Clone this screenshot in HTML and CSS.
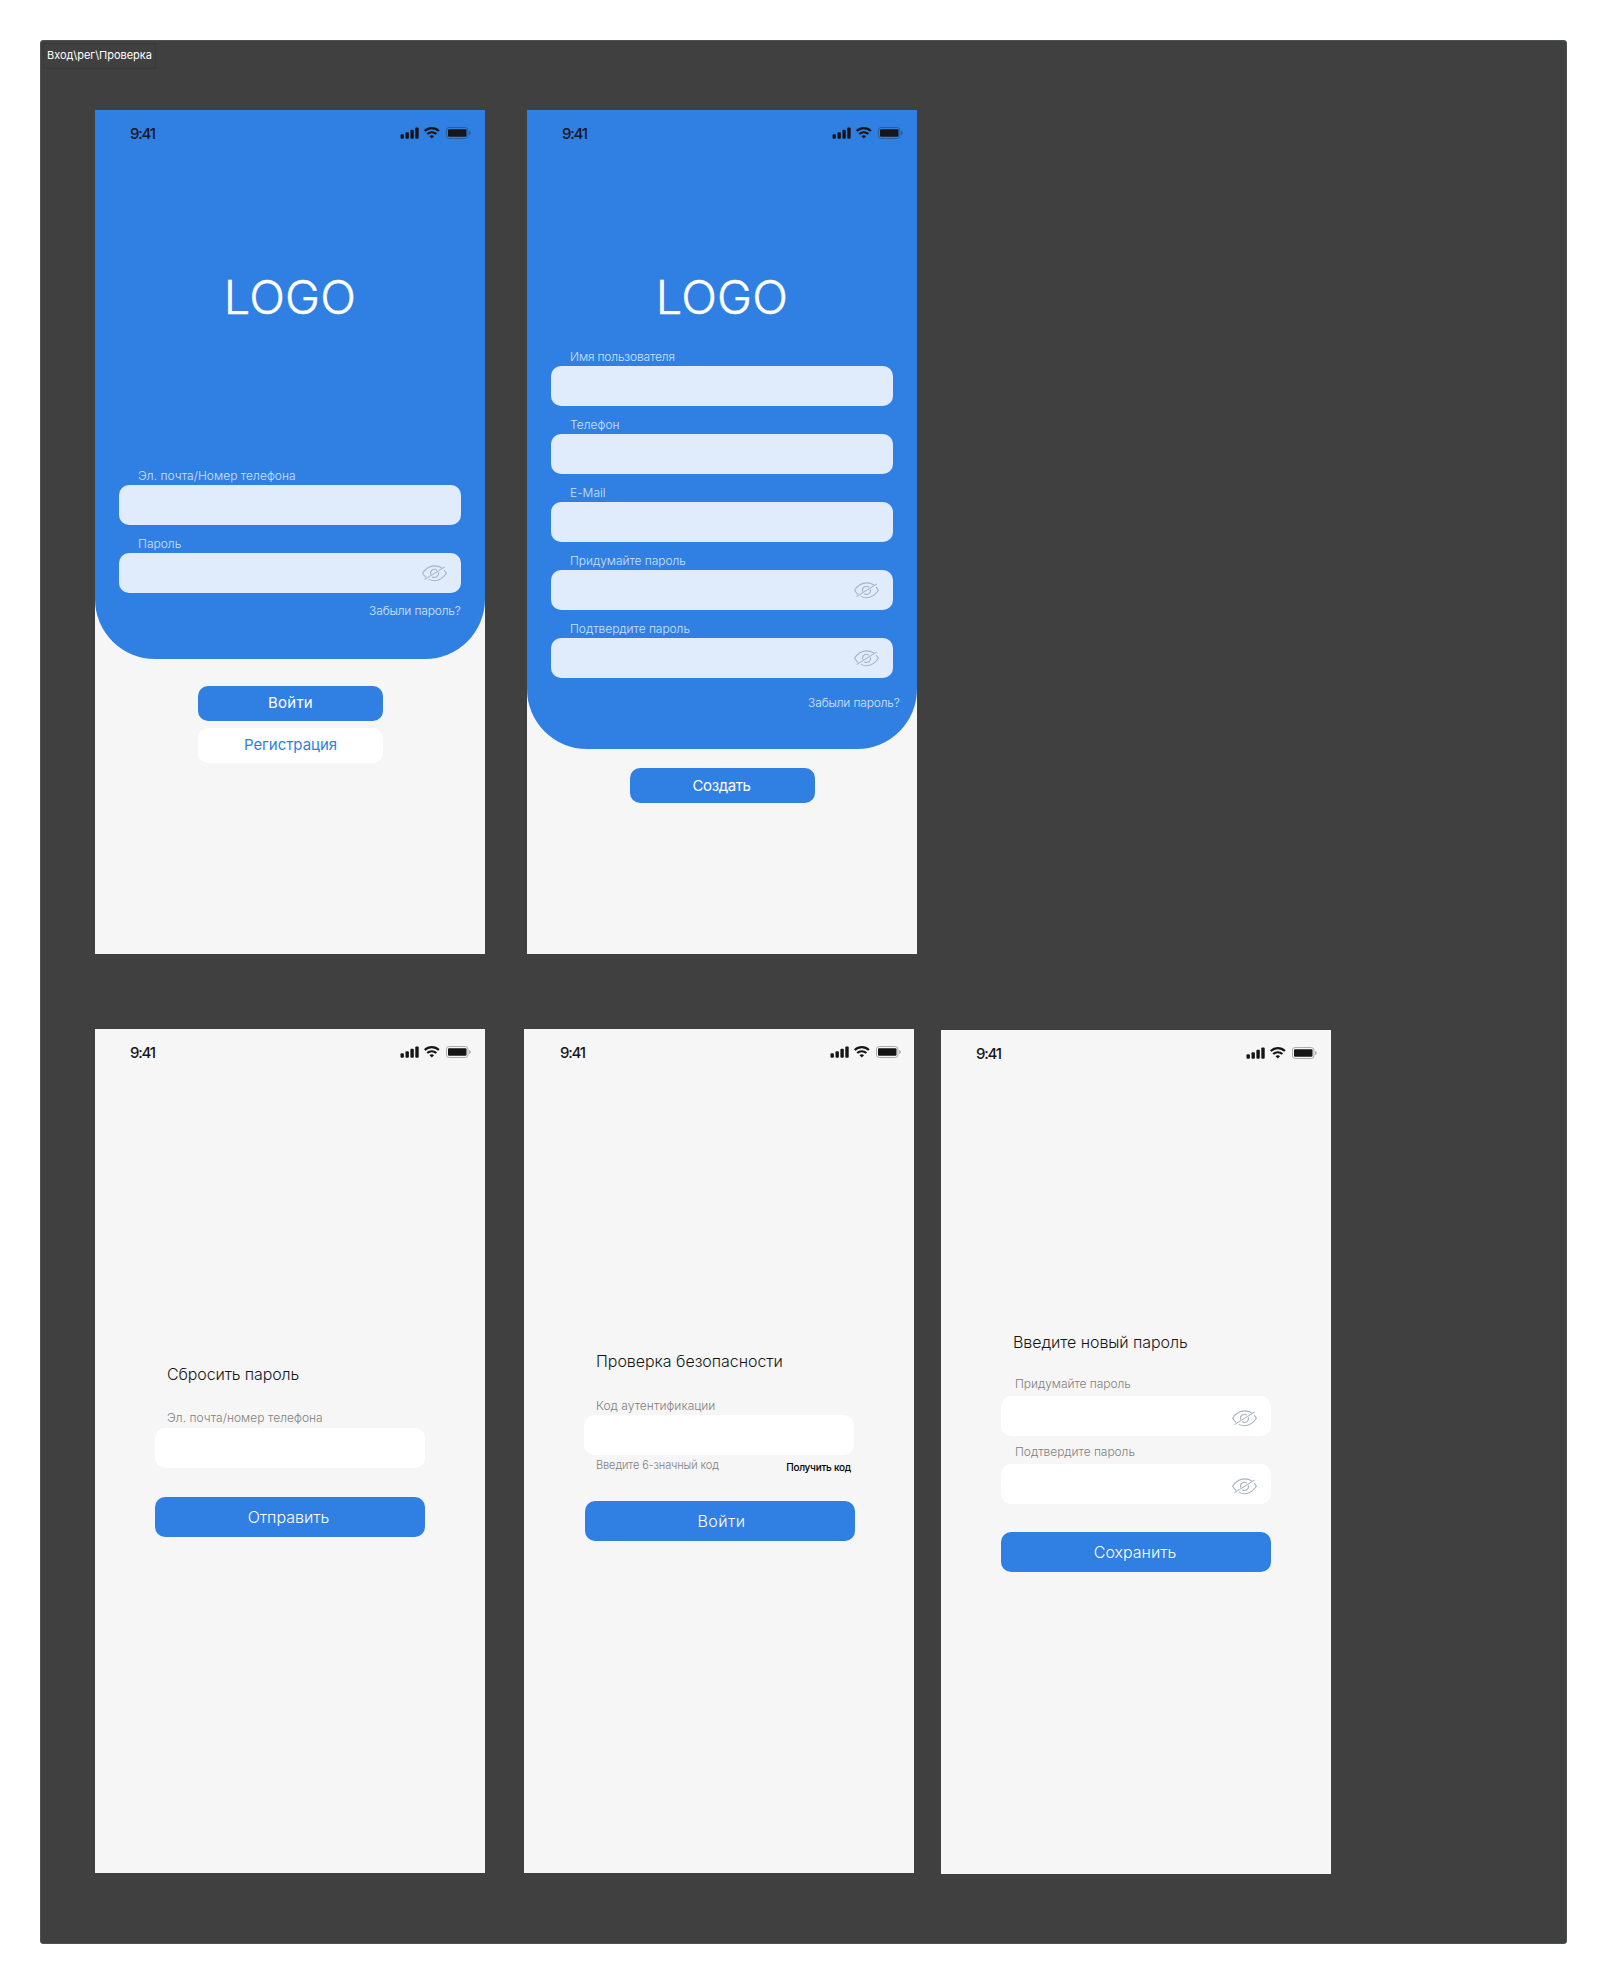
FILE: index.html
```
<!DOCTYPE html>
<html lang="ru">
<head>
<meta charset="utf-8">
<title>Вход\рег\Проверка</title>
<link rel="stylesheet" href="styles.css">
</head>
<body>
<svg class="sprite" aria-hidden="true">
  <symbol id="status" viewBox="0 0 72 14">
    <g fill="#161616">
      <rect x=".5" y="8.3" width="3.4" height="4.4" rx="1"/>
      <rect x="5.5" y="6.3" width="3.4" height="6.4" rx="1"/>
      <rect x="10.4" y="3.8" width="3.4" height="8.9" rx="1"/>
      <rect x="15.3" y="1.4" width="3.4" height="11.3" rx="1"/>
      <path d="M31.8 12.5l-2.3-2.2a3.3 3.3 0 0 1 4.6 0z"/>
      <rect x="48" y="3.3" width="18.5" height="7.4" rx="1"/>
    </g>
    <g fill="none" stroke="#161616" stroke-width="2.1">
      <path d="M24.7 5a10.3 10.3 0 0 1 14.2 0"/>
      <path d="M27.2 8.1a6.6 6.6 0 0 1 9.2 0"/>
    </g>
    <g opacity=".32">
      <rect x="46.5" y="1.5" width="21.4" height="11" rx="2.6" fill="none" stroke="#161616"/>
      <path d="M69 5v4q1.8-.6 1.8-2T69 5z" fill="#161616"/>
    </g>
  </symbol>
  <symbol id="eye-off" viewBox="0 0 25 17">
    <g fill="none" stroke="currentColor" stroke-width="1.1">
      <path d="M20.2 3.1Q16.7.9 12.5.9C8 .9 4 3 .6 8.3q1.6 2.6 3.6 4.3"/>
      <path d="M6.8 14.1q2.6 1.7 5.7 1.7c4.5 0 8.5-2.5 11.9-7.5q-1-1.7-2.3-3.1"/>
      <path d="M15 5.2a4 4 0 0 0-6.300 4.400M10.300 11.700a4 4 0 0 0 6.100-4.300M2.500 14.600 22.800 1.900"/>
    </g>
  </symbol>
</svg>

<main class="board">
  <div class="board-name">Вход\рег\Проверка</div>

  <div class="row">
    <section class="screen">
      <div class="hero hero-login">
        <header class="status"><span class="time">9:41</span><svg class="status-icons"><use href="#status"/></svg></header>
        <h1 class="logo">LOGO</h1>
        <label class="label t-mail">Эл. почта/Номер телефона</label>
        <div class="field"></div>
        <label class="label">Пароль</label>
        <div class="field"><svg class="eye"><use href="#eye-off"/></svg></div>
        <a class="forgot">Забыли пароль?</a>
      </div>
      <div class="actions actions-login">
        <button class="btn raised"><span class="t-enter">Войти</span></button>
        <button class="btn light raised"><span class="t-reg">Регистрация</span></button>
      </div>
    </section>

    <section class="screen screen-signup">
      <div class="hero hero-signup">
        <header class="status"><span class="time">9:41</span><svg class="status-icons"><use href="#status"/></svg></header>
        <h1 class="logo">LOGO</h1>
        <label class="label t-user">Имя пользователя</label>
        <div class="field"></div>
        <label class="label t-phone">Телефон</label>
        <div class="field"></div>
        <label class="label t-email">E-Mail</label>
        <div class="field"></div>
        <label class="label t-pass">Придумайте пароль</label>
        <div class="field"><svg class="eye"><use href="#eye-off"/></svg></div>
        <label class="label t-pass">Подтвердите пароль</label>
        <div class="field"><svg class="eye"><use href="#eye-off"/></svg></div>
        <a class="forgot">Забыли пароль?</a>
      </div>
      <div class="actions actions-signup">
        <button class="btn"><span class="t-create">Создать</span></button>
      </div>
    </section>
  </div>

  <div class="row">
    <section class="screen">
      <header class="status"><span class="time">9:41</span><svg class="status-icons"><use href="#status"/></svg></header>
      <div class="form form-reset">
        <h2 class="title t-reset">Сбросить пароль</h2>
        <label class="label t-mail">Эл. почта/номер телефона</label>
        <div class="field"></div>
        <button class="btn wide">Отправить</button>
      </div>
    </section>

    <section class="screen screen-code">
      <header class="status"><span class="time">9:41</span><svg class="status-icons"><use href="#status"/></svg></header>
      <div class="form form-code">
        <h2 class="title t-check">Проверка безопасности</h2>
        <label class="label t-code">Код аутентификации</label>
        <div class="field"></div>
        <div class="hints"><span class="hint">Введите 6-значный код</span><a class="get-code">Получить код</a></div>
        <button class="btn wide"><span class="t-enter-wide">Войти</span></button>
      </div>
    </section>

    <section class="screen screen-new">
      <header class="status"><span class="time">9:41</span><svg class="status-icons"><use href="#status"/></svg></header>
      <div class="form form-new">
        <h2 class="title t-new">Введите новый пароль</h2>
        <label class="label t-pass">Придумайте пароль</label>
        <div class="field"><svg class="eye"><use href="#eye-off"/></svg></div>
        <label class="label t-pass">Подтвердите пароль</label>
        <div class="field"><svg class="eye"><use href="#eye-off"/></svg></div>
        <button class="btn wide">Сохранить</button>
      </div>
    </section>
  </div>
</main>
</body>
</html>
```
FILE: styles.css
```
* { box-sizing: border-box; }

body {
  margin: 0;
  padding: 40px;
  background: #fff;
  font-family: Inter, "Open Sans", sans-serif;
  font-weight: 300;
}

h1, h2 { margin: 0; font-weight: 300; }

.sprite { display: none; }

.board {
  width: 1527px;
  height: 1904px;
  padding: 2px;
  border: 1px solid #4e5151;
  border-radius: 3px;
  background: #404040;
}

.board-name {
  width: 113px;
  height: 26px;
  margin-bottom: 41px;
  padding-left: 3px;
  border: 1px solid #393939;
  border-radius: 2px;
  color: #fff;
  font-size: 11px;
  font-weight: 400;
  line-height: 23px;
  letter-spacing: -.03px;
  white-space: nowrap;
}

.row {
  display: flex;
  align-items: flex-start;
  margin: 0 0 75px 52px;
}

.screen {
  display: flex;
  flex-direction: column;
  flex: none;
  width: 390px;
  height: 844px;
  background: #f6f6f6;
}

.screen-signup { margin-left: 42px; }
.screen-code { margin-left: 39px; }
.screen-new { margin: 1px 0 0 27px; }

.status {
  display: flex;
  justify-content: space-between;
  height: 44px;
  padding: 14px 13px 0 35px;
}

.screen-code .status { padding: 14px 12px 0 36px; }

.time {
  color: #161616;
  font-size: 15px;
  font-weight: 500;
  line-height: 20px;
  letter-spacing: -1.2px;
}

.status-icons { width: 72px; height: 14px; margin-top: 2px; }

/* Blue header panels */
.hero {
  display: flex;
  flex-direction: column;
  border-radius: 0 0 60px 60px;
  background: #3080e4;
}

.hero-login { height: 549px; }
.hero-signup { height: 639px; }

.logo {
  height: 60px;
  margin-top: 113px;
  color: #fff;
  font-size: 47px;
  line-height: 59px;
  text-align: center;
  letter-spacing: .2px;
  -webkit-text-stroke: .4px #fff;
}

.label {
  height: 16px;
  margin-bottom: 1px;
  color: #808080;
  font-size: 12px;
  line-height: 16px;
  white-space: nowrap;
}

.hero .label { margin-left: 43px; color: #d0e2fa; }
.hero-login .logo { margin-bottom: 141px; }
.hero-signup .logo { margin-bottom: 22px; }

.field {
  display: flex;
  align-items: center;
  justify-content: flex-end;
  flex: none;
  height: 40px;
  margin-bottom: 11px;
  padding-right: 14px;
  border-radius: 10px;
  background: #fff;
}

.hero .field { margin-inline: 24px; background: #e0ecfc; }

.eye { width: 25px; height: 17px; color: #a8b3c1; }

.forgot {
  align-self: flex-end;
  color: #d8e7fb;
  font-size: 12px;
  line-height: 16px;
  letter-spacing: -.17px;
}

.hero-login .forgot { margin: -1px 24.500px 0 0; }
.hero-signup .forgot { margin: 6px 17.500px 0 0; }

.actions {
  display: flex;
  flex-direction: column;
  align-items: center;
  gap: 7px;
}

.actions-login { padding: 27px 0 0 1px; }
.actions-signup { padding: 19px 0 0 1px; }

.btn {
  display: flex;
  align-items: center;
  justify-content: center;
  width: 185px;
  height: 35px;
  padding: 0;
  border: 0;
  border-radius: 10px;
  background: #3080e4;
  color: #fff;
  font-family: inherit;
  font-size: 15px;
  font-weight: 400;
}

.btn.raised { padding-bottom: 2px; }
.btn.light { background: #fff; color: #3080e4; }
.actions-signup .btn { padding-right: 2px; }

.btn.wide {
  width: 270px;
  height: 40px;
  font-size: 16px;
  font-weight: 300;
}

/* Centred forms on the light screens */
.form {
  display: flex;
  flex-direction: column;
  width: 270px;
  margin-left: 60px;
}

.title {
  height: 24px;
  margin-left: 12px;
  color: #161616;
  font-size: 16px;
  line-height: 24px;
  white-space: nowrap;
}

.form .label { margin-left: 12px; }

.form-reset { padding-top: 289px; }
.form-reset .title { margin-bottom: 24px; }
.form-reset .label { margin-bottom: 2px; }
.form-reset .btn { margin-top: 18px; padding-right: 3px; }

.form-code { padding-top: 276px; }
.form-code .title { margin-bottom: 25px; }
.form-code .field { margin-bottom: 0; }
.form-code .btn { margin: 25px 0 0 1px; padding-left: 3px; }

.form-new { padding-top: 256px; }
.form-new .title { margin-bottom: 22px; }
.form-new .label { margin: 0 0 4px 14px; }
.form-new .field { margin-bottom: 8px; padding-top: 4px; }
.form-new .btn { margin-top: 20px; padding-right: 2px; }

.hints {
  display: flex;
  justify-content: space-between;
  height: 21px;
  padding: 2px 3px 0 12px;
}

.hint {
  color: #808080;
  font-size: 11px;
  line-height: 17px;
  letter-spacing: -.1px;
}

.get-code {
  padding-top: 2px;
  color: #000;
  font-size: 10px;
  font-weight: 500;
  line-height: 16px;
  letter-spacing: -.25px;
}

/* Optical tracking per caption */
.t-mail { letter-spacing: .04px; }
.t-user { letter-spacing: -.16px; }
.t-phone { letter-spacing: .02px; }
.t-email { letter-spacing: .02px; }
.t-pass { letter-spacing: -.05px; }
.t-code { letter-spacing: .04px; }
.t-enter { letter-spacing: .2px; }
.t-enter-wide { letter-spacing: .4px; }
.t-reg { letter-spacing: -.04px; }
.t-create { letter-spacing: -.4px; }
.t-reset { letter-spacing: -.12px; }
.t-check { letter-spacing: -.04px; }
.t-new { letter-spacing: -.08px; }
```
